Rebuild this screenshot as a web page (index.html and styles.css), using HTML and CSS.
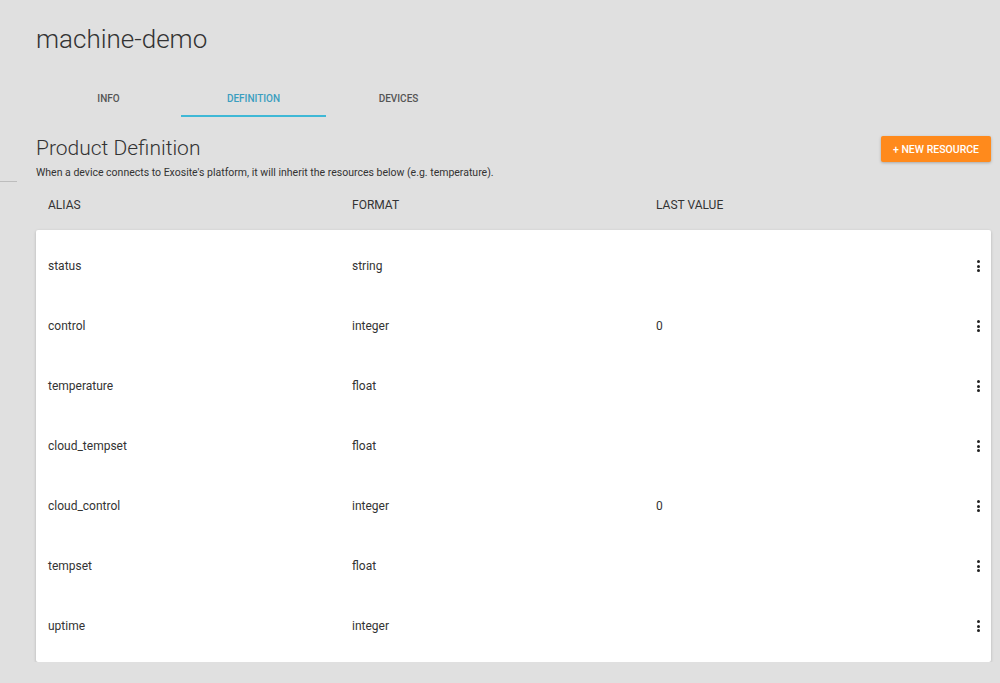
FILE: index.html
```html
<!DOCTYPE html>
<html>
<head>
<meta charset="utf-8">
<link rel="stylesheet" href="styles.css">
</head>
<body>
<div class="page">
  <h1 class="title">machine-demo</h1>
  <nav class="tabs">
    <div class="tab">INFO</div>
    <div class="tab active">DEFINITION</div>
    <div class="tab">DEVICES</div>
  </nav>
  <div class="section-head">
    <div class="section-text">
      <h2 class="section-title">Product Definition</h2>
      <p class="section-sub">When a device connects to Exosite's platform, it will inherit the resources below (e.g. temperature).</p>
    </div>
    <button class="btn">+ NEW RESOURCE</button>
  </div>
  <div class="side-line"></div>
  <div class="thead">
    <div class="col">ALIAS</div>
    <div class="col">FORMAT</div>
    <div class="col">LAST VALUE</div>
  </div>
  <div class="card">
    <div class="row"><div class="col">status</div><div class="col">string</div><div class="col"></div><span class="kebab"><i></i><i></i><i></i></span></div>
    <div class="row"><div class="col">control</div><div class="col">integer</div><div class="col">0</div><span class="kebab"><i></i><i></i><i></i></span></div>
    <div class="row"><div class="col">temperature</div><div class="col">float</div><div class="col"></div><span class="kebab"><i></i><i></i><i></i></span></div>
    <div class="row"><div class="col">cloud_tempset</div><div class="col">float</div><div class="col"></div><span class="kebab"><i></i><i></i><i></i></span></div>
    <div class="row"><div class="col">cloud_control</div><div class="col">integer</div><div class="col">0</div><span class="kebab"><i></i><i></i><i></i></span></div>
    <div class="row"><div class="col">tempset</div><div class="col">float</div><div class="col"></div><span class="kebab"><i></i><i></i><i></i></span></div>
    <div class="row"><div class="col">uptime</div><div class="col">integer</div><div class="col"></div><span class="kebab"><i></i><i></i><i></i></span></div>
  </div>
</div>
</body>
</html>
```
FILE: styles.css
```css
html, body {
  margin: 0;
  padding: 0;
  background: #e0e0e0;
  font-family: Roboto, "Liberation Sans", sans-serif;
  color: #333;
}
.page {
  position: relative;
  padding: 0 9px 0 36px;
}
.title {
  margin: 0;
  padding-top: 23px;
  height: 81px;
  box-sizing: border-box;
  font-size: 26px;
  font-weight: 300;
  line-height: 32px;
  color: #333;
}
.tabs {
  display: flex;
  height: 36px;
}
.tab {
  width: 145px;
  box-sizing: border-box;
  text-align: center;
  font-size: 10px;
  font-weight: 500;
  color: #555;
  padding-top: 12px;
  border-bottom: 2px solid transparent;
}
.tab.active {
  color: #3a9ebf;
  border-bottom-color: #3fb8d6;
}
.section-head {
  display: flex;
  justify-content: space-between;
  align-items: flex-start;
  padding-top: 19px;
}
.section-title {
  margin: 0;
  font-size: 21px;
  font-weight: 300;
  line-height: 24px;
  color: #333;
}
.section-sub {
  margin: 6px 0 0;
  font-size: 10.5px;
  line-height: 14px;
  color: #333;
}
.btn {
  margin-top: 0;
  width: 110px;
  height: 26px;
  border: none;
  border-radius: 2px;
  background: #ff8a1c;
  color: #fff;
  font-family: Roboto, "Liberation Sans", sans-serif;
  font-size: 10.5px;
  font-weight: 500;
  padding: 0;
  box-shadow: 0 1px 3px rgba(0,0,0,0.25);
}
.side-line {
  position: absolute;
  left: 0;
  top: 181px;
  width: 17px;
  height: 1px;
  background: #bdbdbd;
}
.thead {
  display: flex;
  padding: 18px 12px 0;
  height: 32px;
  font-size: 12px;
  color: #333;
}
.col {
  width: 304px;
  flex: none;
}
.card {
  background: #fff;
  border-radius: 2px;
  box-shadow: 0 1px 3px rgba(0,0,0,0.22);
  padding: 6px 0;
}
.row {
  display: flex;
  align-items: center;
  height: 60px;
  padding: 0 12px;
  font-size: 12px;
  color: #333;
}
.kebab {
  margin-left: auto;
  margin-right: -1px;
  display: flex;
  flex-direction: column;
  gap: 1.5px;
}
.kebab i {
  display: block;
  width: 3px;
  height: 3px;
  border-radius: 50%;
  background: #222;
}
```
